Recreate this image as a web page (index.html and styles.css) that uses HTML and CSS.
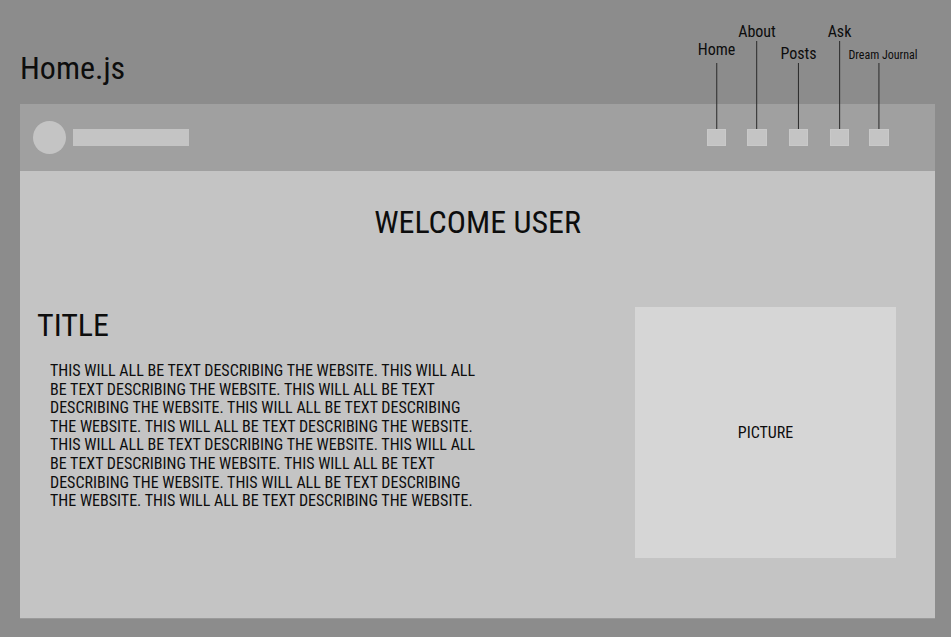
FILE: index.html
```html
<!DOCTYPE html>
<html lang="en">
<head>
<meta charset="utf-8">
<title>Home.js</title>
<link rel="stylesheet" href="styles.css">
</head>
<body>
<div class="page">
  <header class="top">
    <h1 class="file-title">Home.js</h1>
  </header>
  <section class="frame">
    <nav class="navbar">
      <div class="brand">
        <span class="avatar"></span>
        <span class="brand-bar"></span>
      </div>
      <ul class="nav-items">
        <li class="nav-item"><span class="tag tag-low tag-home"><span class="tag-label">Home</span><span class="tag-line"></span></span></li>
        <li class="nav-item"><span class="tag tag-high"><span class="tag-label">About</span><span class="tag-line"></span></span></li>
        <li class="nav-item"><span class="tag tag-low"><span class="tag-label">Posts</span><span class="tag-line"></span></span></li>
        <li class="nav-item"><span class="tag tag-high"><span class="tag-label">Ask</span><span class="tag-line"></span></span></li>
        <li class="nav-item"><span class="tag tag-low tag-small"><span class="tag-label">Dream Journal</span><span class="tag-line"></span></span></li>
      </ul>
    </nav>
    <main class="content">
      <h2 class="welcome">WELCOME USER</h2>
      <div class="row">
        <div class="intro">
          <h3 class="intro-title">TITLE</h3>
          <p class="intro-text">THIS WILL ALL BE TEXT DESCRIBING THE WEBSITE. THIS WILL ALL<br>BE TEXT DESCRIBING THE WEBSITE. THIS WILL ALL BE TEXT<br>DESCRIBING THE WEBSITE. THIS WILL ALL BE TEXT DESCRIBING<br>THE WEBSITE. THIS WILL ALL BE TEXT DESCRIBING THE WEBSITE.<br>THIS WILL ALL BE TEXT DESCRIBING THE WEBSITE. THIS WILL ALL<br>BE TEXT DESCRIBING THE WEBSITE. THIS WILL ALL BE TEXT<br>DESCRIBING THE WEBSITE. THIS WILL ALL BE TEXT DESCRIBING<br>THE WEBSITE. THIS WILL ALL BE TEXT DESCRIBING THE WEBSITE.</p>
        </div>
        <div class="picture">PICTURE</div>
      </div>
    </main>
  </section>
</div>
</body>
</html>
```
FILE: styles.css
```css
* { box-sizing: border-box; }
html, body { margin: 0; padding: 0; }
body {
  background: #8c8c8c;
  font-family: "Roboto Condensed", "Liberation Sans Narrow", Roboto, sans-serif;
  font-stretch: condensed;
  color: #0d0d0d;
}
.page {
  width: 951px;
  height: 637px;
  overflow: hidden;
}
.top {
  height: 104px;
  padding: 48px 0 0 20px;
}
.file-title {
  margin: 0;
  font-size: 32px;
  line-height: 40px;
  font-weight: 400;
}
.frame {
  margin: 0 16px 0 20px;
  height: 515px;
  display: flex;
  flex-direction: column;
  border-bottom: 1px solid #9a9a9a;
}
.navbar {
  height: 67px;
  background: #a0a0a0;
  display: flex;
  align-items: center;
  justify-content: space-between;
  padding: 0 46px 0 13px;
}
.brand {
  display: flex;
  align-items: center;
  gap: 7px;
}
.avatar {
  width: 33px;
  height: 33px;
  border-radius: 50%;
  background: #c4c4c4;
}
.brand-bar {
  width: 116px;
  height: 17px;
  background: #c4c4c4;
}
.nav-items {
  list-style: none;
  margin: 0;
  padding: 0;
  display: flex;
  gap: 21px;
}
.nav-item {
  position: relative;
  width: 19px;
  height: 17px;
  background: #c4c4c4;
  box-shadow: inset 0 0 0 1px #c9c9c9;
}
.nav-item:nth-child(2) { width: 20px; }
.nav-item:nth-child(3),
.nav-item:nth-child(4) { margin-left: 1px; }
.nav-item:nth-child(5) { margin-left: -1px; width: 20px; }
.tag {
  position: absolute;
  bottom: 100%;
  left: 50%;
  transform: translateX(-50%);
  display: flex;
  flex-direction: column;
  align-items: center;
  white-space: nowrap;
}
.tag-label {
  font-size: 16px;
  line-height: 16px;
  margin-bottom: 1px;
}
.tag-line {
  width: 1px;
  background: #2a2a2a;
}
.tag-low .tag-line { height: 66px; }
.tag-high .tag-line { height: 88px; }
.tag-home .tag-label { margin-bottom: 5px; }
.tag-small .tag-label {
  font-size: 12px;
  line-height: 12px;
  margin-bottom: 2px;
  transform: translateX(4px);
}
.content {
  flex: 1;
  background: #c4c4c4;
  padding-top: 32px;
}
.welcome {
  margin: 0;
  text-align: center;
  font-size: 32px;
  line-height: 38px;
  font-weight: 400;
}
.row {
  margin-top: 66px;
  display: flex;
  justify-content: space-between;
  align-items: flex-start;
  padding-right: 39px;
}
.intro {
  padding-left: 17px;
}
.intro-title {
  margin: 0;
  font-size: 32px;
  line-height: 36px;
  font-weight: 400;
}
.intro-text {
  margin: 19px 0 0 13px;
  font-size: 16px;
  line-height: 18.6px;
  white-space: nowrap;
}
.picture {
  width: 261px;
  height: 251px;
  background: #d6d6d6;
  display: flex;
  align-items: center;
  justify-content: center;
  font-size: 16px;
}
```
